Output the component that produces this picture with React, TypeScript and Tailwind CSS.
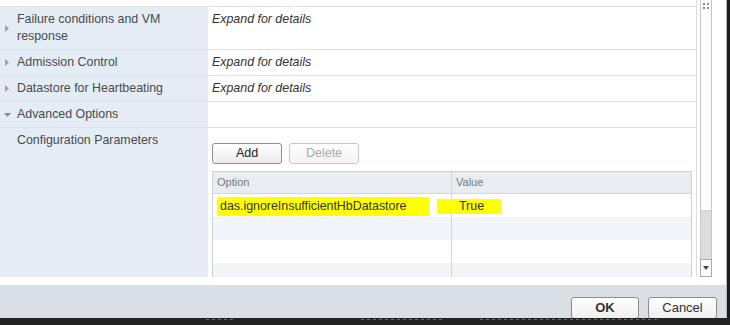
import React from "react";

function TriRight() {
  return (
    <svg width="4" height="7" viewBox="0 0 4 7" className="block">
      <polygon points="0,0 4,3.5 0,7" fill="#a0a0a0" />
    </svg>
  );
}

function TriDown() {
  return (
    <svg width="7" height="4" viewBox="0 0 7 4" className="block">
      <polygon points="0,0 7,0 3.5,4" fill="#8a8a8a" />
    </svg>
  );
}

function PropRow({
  label,
  value,
  h,
  open,
}: {
  label: React.ReactNode;
  value?: string;
  h: string;
  open?: boolean;
}) {
  return (
    <div className={`flex border-t border-[#e1e1e1] ${h}`}>
      <div className="w-[208px] bg-[#e4edf5] flex items-center pl-[4px]">
        <div className="w-[13px] flex items-center">
          {open ? <TriDown /> : <span className="ml-[1px]"><TriRight /></span>}
        </div>
        <div className="text-[12.4px] leading-[17px] text-[#4a4a4a] self-start pt-[4px]">{label}</div>
      </div>
      <div className="flex-1 pl-[4px] pt-[4px] text-[12.4px] leading-[17px] italic text-[#333]">{value}</div>
    </div>
  );
}

function Marks({ n, ml }: { n: number; ml: string }) {
  return (
    <div className={`flex gap-[3px] ${ml}`}>
      {Array.from({ length: n }).map((_, i) => (
        <div key={i} className="w-[3px] h-[1px] bg-[#6a6a6a]" />
      ))}
    </div>
  );
}

export default function App() {
  return (
    <div className="w-[730px] h-[325px] bg-[#232323] flex flex-col overflow-hidden font-['Liberation_Sans',Arial,sans-serif]">
      <div className="flex h-[318px] shrink-0">
        <div className="w-[727px] flex flex-col border-r border-[#b8b8b8] bg-white">
          <div className="h-[285px] flex shrink-0">
            <div className="w-[697px] h-[277px] flex flex-col pt-[6px] border-r border-[#dcdcdc] overflow-hidden">
              <PropRow
                h="h-[43px]"
                label={<>Failure conditions and VM<br />response</>}
                value="Expand for details"
              />
              <PropRow h="h-[26px]" label="Admission Control" value="Expand for details" />
              <PropRow h="h-[26px]" label="Datastore for Heartbeating" value="Expand for details" />
              <PropRow h="h-[26px]" label="Advanced Options" open />
              <div className="flex flex-1 border-t border-[#e1e1e1] min-h-0">
                <div className="w-[208px] bg-[#e4edf5] pl-[17px] pt-[4px] text-[12.4px] leading-[17px] text-[#4a4a4a]">
                  Configuration Parameters
                </div>
                <div className="flex-1 pl-[4px] pr-[4px] pt-[15px] flex flex-col min-h-0">
                  <div className="flex gap-[7px]">
                    <div className="w-[70px] h-[21px] rounded-[3px] border border-[#8f8f8f] bg-gradient-to-b from-white to-[#ececec] flex items-center justify-center text-[12.5px] text-[#222]">
                      Add
                    </div>
                    <div className="w-[70px] h-[21px] rounded-[3px] border border-[#c8c8c8] bg-gradient-to-b from-white to-[#f3f3f3] flex items-center justify-center text-[12.5px] text-[#a8a8a8]">
                      Delete
                    </div>
                  </div>
                  <div className="mt-[7px] flex-1 border-l border-t border-r border-[#d0d0d0] flex flex-col overflow-hidden">
                    <div className="h-[22px] shrink-0 bg-[#e9edf1] border-b border-[#d6d6d6] flex text-[11px] text-[#777]">
                      <div className="w-[239px] border-r border-[#d6d6d6] pl-[4px] flex items-center">Option</div>
                      <div className="flex-1 pl-[4px] flex items-center">Value</div>
                    </div>
                    <div className="h-[23px] shrink-0 bg-white flex text-[12.4px] text-[#333]">
                      <div className="w-[239px] border-r border-[#d4d4d4] flex items-center">
                        <span className="ml-[4px] w-[212px] h-[19px] bg-[#ffff00] pl-[3px] leading-[19px] mt-[1px] whitespace-nowrap">
                          das.ignoreInsufficientHbDatastore
                        </span>
                      </div>
                      <div className="flex-1 flex items-center">
                        <span className="relative ml-[-15px] w-[64px] h-[15px] bg-[#ffff00] pl-[22px] leading-[15px] mt-[1px]">
                          True
                        </span>
                      </div>
                    </div>
                    {["bg-[#f2f5f9]", "bg-white", "bg-[#f2f5f9]"].map((c, i) => (
                      <div key={i} className={`h-[23px] shrink-0 flex ${c}`}>
                        <div className="w-[239px] border-r border-[#d4d4d4]" />
                        <div className="flex-1" />
                      </div>
                    ))}
                  </div>
                </div>
              </div>
            </div>
            <div className="flex-1 relative pl-[3px]">
              <div className="w-[12px] h-[277px] border-l border-r border-[#c6c6c6] flex flex-col">
                <div className="h-[211px] bg-white border-b border-[#d0d0d0]" />
                <div className="flex-1 bg-[#dddddd]" />
                <div className="h-[18px] bg-white border border-[#a8a8a8] -mx-[1px] flex items-center justify-center">
                  <svg width="6" height="4" viewBox="0 0 6 4">
                    <polygon points="0,0 6,0 3,4" fill="#444" />
                  </svg>
                </div>
              </div>
              <div className="absolute left-[6px] top-[3px] grid grid-cols-2 gap-[2px]">
                <div className="w-[2px] h-[2px] bg-[#8a8a8a]" />
                <div className="w-[2px] h-[2px] bg-[#8a8a8a]" />
                <div className="w-[2px] h-[2px] bg-[#8a8a8a]" />
                <div className="w-[2px] h-[2px] bg-[#8a8a8a]" />
              </div>
            </div>
          </div>
          <div className="flex-1 bg-[#dadee5] flex justify-end items-start pt-[12px] pr-[9px] gap-[9px] overflow-hidden">
            <div className="w-[68px] h-[22px] shrink-0 rounded-[3px] border border-[#8c8c8c] bg-gradient-to-b from-white to-[#efefef] flex items-center justify-center text-[13px] font-bold text-[#333]">
              OK
            </div>
            <div className="w-[69px] h-[22px] shrink-0 rounded-[3px] border border-[#8c8c8c] bg-gradient-to-b from-white to-[#efefef] flex items-center justify-center text-[13px] text-[#333]">
              Cancel
            </div>
          </div>
        </div>
        <div className="flex-1 bg-[#1c1c1c]" />
      </div>
      <div className="flex-1 bg-[#232323] flex pt-[1px]">
        <Marks n={5} ml="ml-[206px]" />
        <Marks n={14} ml="ml-[128px]" />
        <Marks n={30} ml="ml-[38px]" />
      </div>
    </div>
  );
}
